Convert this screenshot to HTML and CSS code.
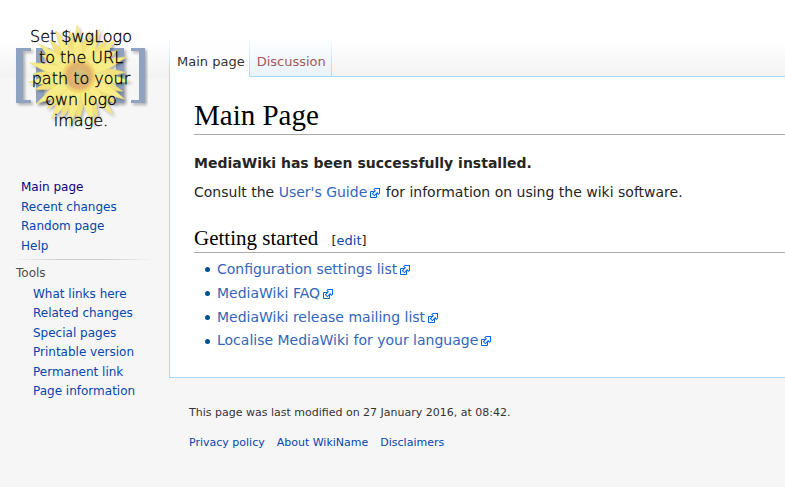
FILE: index.html
```html
<!DOCTYPE html>
<html lang="en">
<head>
<meta charset="utf-8">
<title>Main Page</title>
<link rel="stylesheet" href="styles.css">
</head>
<body>
<svg class="sprites" width="0" height="0" aria-hidden="true">
  <symbol id="external" viewBox="0 0 12 12">
    <path fill="#fff" stroke="#06c" d="M1.5 4.518h5.982V10.5H1.5z"/>
    <path fill="#06f" d="M5.765 1H11v5.39L9.427 7.937l-1.31-1.31L5.393 9.35l-2.69-2.688 2.81-2.808L4.2 2.544z"/>
    <path fill="#fff" d="M9.995 2.004l.022 4.885L8.2 5.07 5.32 7.95 4.09 6.723l2.882-2.88-1.85-1.852z"/>
  </symbol>
</svg>
<div class="page">
  <aside class="sidebar">
    <a class="logo" href="#">
      <svg class="logo-art" viewBox="0 0 136 110" aria-hidden="true">
        <defs>
          <radialGradient id="disk">
            <stop offset="0" stop-color="#cdbf80"/>
            <stop offset=".4" stop-color="#d9bd74"/>
            <stop offset=".7" stop-color="#e0b070"/>
            <stop offset="1" stop-color="#f0cd70"/>
          </radialGradient>
          <filter id="shadow" x="-20%" y="-20%" width="140%" height="140%">
            <feDropShadow dx="2" dy="2" stdDeviation="1.5" flood-color="#000" flood-opacity=".3"/>
          </filter>
          <path id="petal" d="M-4-10C-7-24-4-37 0-51C3-37 6-25 4-10Z"/>
          <path id="petal-short" d="M-3-10C-6-22-4-33 1-46C4-33 5-22 3-10Z"/>
        </defs>
        <g fill="#8fa2c0" filter="url(#shadow)">
          <path d="M4 28h15v3h-8v49h8v3H4z"/>
          <path d="M24 28h14v3h-6v49h6v3H24z"/>
          <path d="M133 28h-14v3h8v49h-8v3h14z"/>
          <path d="M112 28H98v3h6v49h-6v3h14z"/>
        </g>
        <g transform="translate(67 56)">
          <g filter="url(#shadow)">
            <circle r="26" fill="#f3e27a"/>
            <g fill="#f1e27e" stroke="#e8d46c" stroke-width=".5">
              <use href="#petal-short" transform="rotate(12)"/>
              <use href="#petal-short" transform="rotate(37)"/>
              <use href="#petal-short" transform="rotate(55)"/>
              <use href="#petal-short" transform="rotate(84)"/>
              <use href="#petal-short" transform="rotate(108)"/>
              <use href="#petal-short" transform="rotate(126)"/>
              <use href="#petal-short" transform="rotate(155)"/>
              <use href="#petal-short" transform="rotate(180)"/>
              <use href="#petal-short" transform="rotate(202)"/>
              <use href="#petal-short" transform="rotate(223)"/>
              <use href="#petal-short" transform="rotate(252)"/>
              <use href="#petal-short" transform="rotate(272)"/>
              <use href="#petal-short" transform="rotate(300)"/>
              <use href="#petal-short" transform="rotate(320)"/>
              <use href="#petal-short" transform="rotate(347)"/>
            </g>
            <g fill="#f8ec86" stroke="#ecdb70" stroke-width=".5">
              <use href="#petal" transform="rotate(-2)"/>
              <use href="#petal" transform="rotate(24)"/>
              <use href="#petal" transform="rotate(45)"/>
              <use href="#petal" transform="rotate(68)"/>
              <use href="#petal" transform="rotate(96)"/>
              <use href="#petal" transform="rotate(117)"/>
              <use href="#petal" transform="rotate(139)"/>
              <use href="#petal" transform="rotate(163)"/>
              <use href="#petal" transform="rotate(191)"/>
              <use href="#petal" transform="rotate(213)"/>
              <use href="#petal" transform="rotate(237)"/>
              <use href="#petal" transform="rotate(263)"/>
              <use href="#petal" transform="rotate(285)"/>
              <use href="#petal" transform="rotate(309)"/>
              <use href="#petal" transform="rotate(333)"/>
            </g>
          </g>
          <circle r="17" fill="#f3d870"/>
          <circle r="15" fill="url(#disk)"/>
          <circle r="12" fill="none" stroke="#cf9c62" stroke-width="2" stroke-dasharray="1 2" opacity=".5"/>
          <circle r="8" fill="none" stroke="#c9a56a" stroke-width="2" stroke-dasharray="1 2" opacity=".5"/>
          <circle r="4" fill="#c2bd8a" opacity=".7"/>
        </g>
      </svg>
      <span class="logo-text">Set $wgLogo<br>to the URL<br>path to your<br>own logo<br>image.</span>
    </a>
    <nav class="nav" aria-label="Navigation">
      <ul>
        <li><a class="visited" href="#">Main page</a></li>
        <li><a href="#">Recent changes</a></li>
        <li><a href="#">Random page</a></li>
        <li><a href="#">Help</a></li>
      </ul>
    </nav>
    <nav class="tools" aria-labelledby="tools-title">
      <h3 id="tools-title">Tools</h3>
      <ul>
        <li><a href="#">What links here</a></li>
        <li><a href="#">Related changes</a></li>
        <li><a href="#">Special pages</a></li>
        <li><a href="#">Printable version</a></li>
        <li><a href="#">Permanent link</a></li>
        <li><a href="#">Page information</a></li>
      </ul>
    </nav>
  </aside>
  <div class="column">
    <nav class="tabs" aria-label="Namespaces">
      <a class="tab selected" href="#">Main page</a>
      <a class="tab missing" href="#">Discussion</a>
      <span class="tabs-rest"></span>
    </nav>
    <main class="content">
      <h1>Main Page</h1>
      <p><strong>MediaWiki has been successfully installed.</strong></p>
      <p>Consult the <a class="external" href="#">User's Guide<svg><use href="#external"/></svg></a> for information on using the wiki software.</p>
      <h2>Getting started <span class="edit">[<a href="#">edit</a>]</span></h2>
      <ul class="links">
        <li><a class="external" href="#">Configuration settings list<svg><use href="#external"/></svg></a></li>
        <li><a class="external" href="#">MediaWiki FAQ<svg><use href="#external"/></svg></a></li>
        <li><a class="external" href="#">MediaWiki release mailing list<svg><use href="#external"/></svg></a></li>
        <li><a class="external" href="#">Localise MediaWiki for your language<svg><use href="#external"/></svg></a></li>
      </ul>
    </main>
    <footer class="footer">
      <p>This page was last modified on 27 January 2016, at 08:42.</p>
      <ul>
        <li><a href="#">Privacy policy</a></li>
        <li><a href="#">About WikiName</a></li>
        <li><a href="#">Disclaimers</a></li>
      </ul>
    </footer>
  </div>
</div>
</body>
</html>
```
FILE: styles.css
```css
* { box-sizing: border-box; }

html { background: #f6f6f6; }

body {
  margin: 0;
  color: #252525;
  font-family: "DejaVu Sans", sans-serif;
  font-size: 14px;
  line-height: 22px;
}

ul, p, h1, h2, h3 { margin: 0; padding: 0; }
ul { list-style: none; }
a { color: #0645ad; text-decoration: none; }
a:hover { text-decoration: underline; }
.sprites { display: block; }

.page {
  display: grid;
  grid-template-columns: 169px minmax(0, 1fr);
  min-height: 100vh;
  background: linear-gradient(#fff 50%, #f3f3f3 95%, #f6f6f6 100%) 0 0 / 100% 80px no-repeat;
}

/* Sidebar */
.sidebar { padding-top: 20px; }

.logo {
  display: grid;
  width: 136px;
  margin-left: 12px;
  color: #000;
}
.logo:hover { text-decoration: none; }
.logo-art, .logo-text { grid-area: 1 / 1; }
.logo-art { display: block; width: 136px; height: 110px; }
.logo-text {
  z-index: 1;
  padding: 6px 0 0 2px;
  font-family: "DejaVu Sans Light", "DejaVu Sans", sans-serif;
  font-size: 16px;
  font-weight: 200;
  line-height: 21px;
  text-align: center;
  -webkit-text-stroke: 0.3px #000;
}

.nav, .tools {
  font-size: 12px;
  line-height: 1.625;
}
.nav { padding: 47px 0 3px 21px; }
.tools {
  margin: 0 16px 0 14px;
  padding: 5px 0 0 2px;
  background: linear-gradient(to right, transparent, #ccc 33%, #ccc 66%, transparent) 0 0 / 100% 1px no-repeat;
}
.tools h3 {
  margin-bottom: 1px;
  color: #4d4d4d;
  font-size: 12px;
  font-weight: normal;
}
.tools ul { padding-left: 17px; }
.visited { color: #0b0080; }

/* Tabs */
.tabs {
  display: flex;
  align-items: stretch;
  height: 77px;
  padding-top: 37px;
}
.tab {
  padding: 14px 5px 0 7px;
  font-size: 13px;
  white-space: nowrap;
  border-left: 1px solid;
  border-image: linear-gradient(transparent, #a7d7f9) 1;
}
.tab.selected {
  padding-right: 4px;
  color: #333;
  background: linear-gradient(transparent, #fff 50%);
}
.tab.missing {
  color: #a55858;
  background:
    linear-gradient(#a7d7f9, #a7d7f9) 0 100% / 100% 1px no-repeat,
    linear-gradient(#fff, #e8f2f8);
}
.tabs-rest {
  flex: 1;
  border-left: 1px solid;
  border-image: linear-gradient(transparent, #a7d7f9) 1;
  background: linear-gradient(#a7d7f9, #a7d7f9) 0 100% / 100% 1px no-repeat;
}

/* Article */
.content {
  padding: 20px 0 24px 24px;
  background: #fff;
  border: solid #a7d7f9;
  border-width: 0 0 1px 1px;
}
h1, h2 {
  color: #000;
  font-family: "Liberation Serif", serif;
  font-weight: normal;
  border-bottom: 1px solid #aaa;
}
h1 {
  margin-bottom: 17px;
  font-size: 29px;
  line-height: 37px;
}
h2 {
  margin: 21px 0 5px;
  font-size: 21px;
  line-height: 28px;
}
.content p { margin-bottom: 7px; }
.edit {
  margin-left: 8px;
  color: #252525;
  font-family: "DejaVu Sans", sans-serif;
  font-size: 13px;
  line-height: 1;
}
.external { color: #36b; }
.external svg {
  width: 12px;
  height: 12px;
  margin-left: 2px;
  vertical-align: -2px;
}
.links {
  padding-left: 11px;
  line-height: 1.7;
}
.links li {
  display: flex;
  align-items: center;
  gap: 7px;
}
.links li::before {
  content: "";
  width: 5px;
  height: 5px;
  border-radius: 50%;
  background: #00528c;
}

/* Footer */
.footer {
  padding: 24px 20px;
  font-size: 11px;
  color: #333;
}
.footer p { margin-bottom: 8px; }
.footer ul {
  display: flex;
  flex-wrap: wrap;
  gap: 12px;
}
```
